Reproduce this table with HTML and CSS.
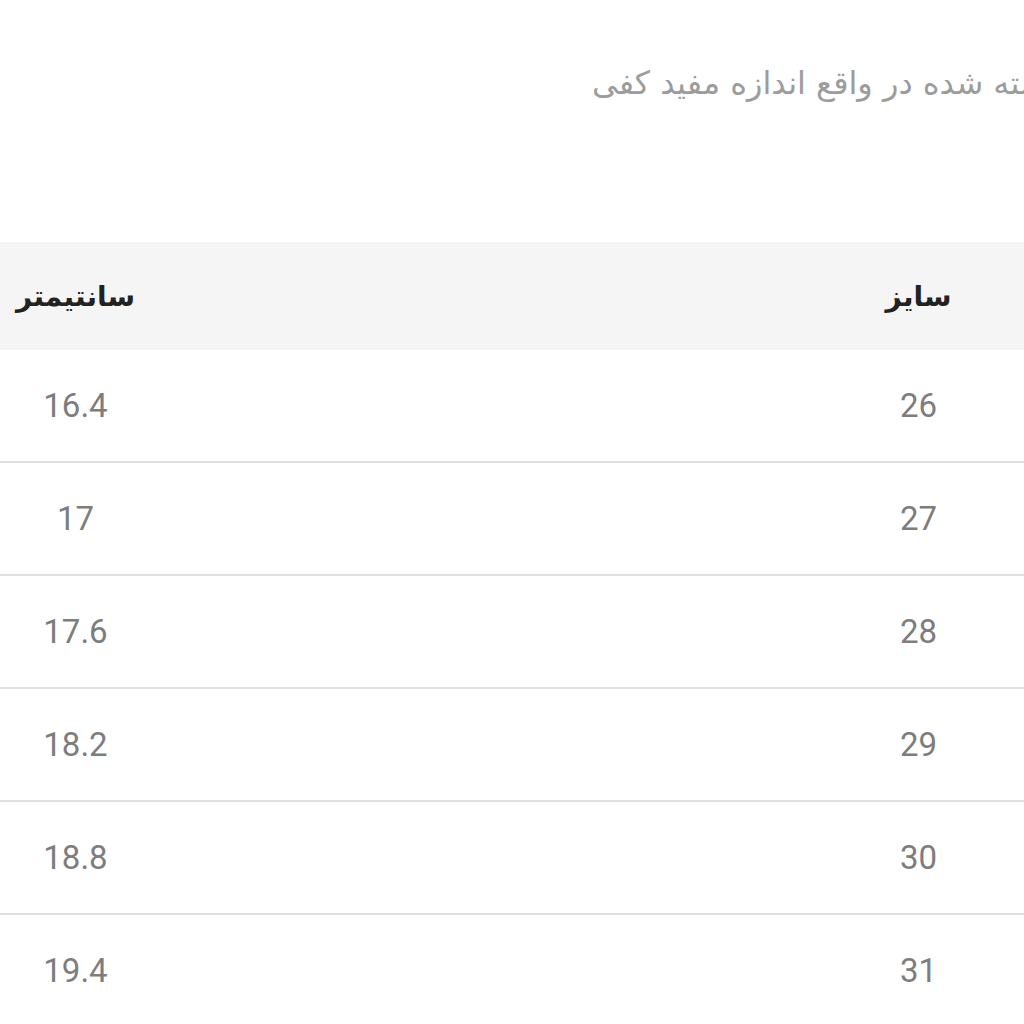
FILE: index.html
```html
<!DOCTYPE html>
<html lang="fa">
<head>
<meta charset="utf-8">
<link rel="stylesheet" href="styles.css">
</head>
<body>
<div class="page">
  <div class="intro">
    <p class="note" dir="rtl">اندازه نوشته شده در واقع اندازه مفید کفی</p>
  </div>
  <div class="table" dir="rtl">
    <div class="row head">
      <div class="cell">سایز</div>
      <div class="cell">سانتیمتر</div>
    </div>
    <div class="row">
      <div class="cell num">26</div>
      <div class="cell num">16.4</div>
    </div>
    <div class="row">
      <div class="cell num">27</div>
      <div class="cell num">17</div>
    </div>
    <div class="row">
      <div class="cell num">28</div>
      <div class="cell num">17.6</div>
    </div>
    <div class="row">
      <div class="cell num">29</div>
      <div class="cell num">18.2</div>
    </div>
    <div class="row">
      <div class="cell num">30</div>
      <div class="cell num">18.8</div>
    </div>
    <div class="row last">
      <div class="cell num">31</div>
      <div class="cell num">19.4</div>
    </div>
  </div>
</div>
</body>
</html>
```
FILE: styles.css
```css
html, body {
  margin: 0;
  padding: 0;
  background: #ffffff;
  overflow: hidden;
}
.page {
  width: 1024px;
  height: 1024px;
  overflow: hidden;
}
.intro {
  height: 180px;
  padding-top: 62px;
  box-sizing: border-box;
}
.note {
  margin: 0 0 0 592px;
  width: max-content;
  white-space: nowrap;
  font-family: "DejaVu Sans", sans-serif;
  font-size: 32px;
  line-height: 42px;
  color: #9c9c9c;
}
.table {
  margin: 62px 0 0 -346px;
  width: 1686px;
}
.row {
  display: grid;
  grid-template-columns: 1fr 1fr;
  height: 111px;
  border-bottom: 2px solid #e0e0e0;
  align-items: center;
}
.row.head {
  height: 108px;
  border-bottom: none;
  background: #f5f5f5;
}
.row.last {
  border-bottom: none;
}
.cell {
  text-align: center;
  font-family: "DejaVu Sans", sans-serif;
  font-weight: bold;
  font-size: 28px;
  color: #222222;
}
.cell.num {
  font-family: Roboto, "Liberation Sans", sans-serif;
  font-weight: normal;
  font-size: 33px;
  color: #7d7d7d;
}
```
